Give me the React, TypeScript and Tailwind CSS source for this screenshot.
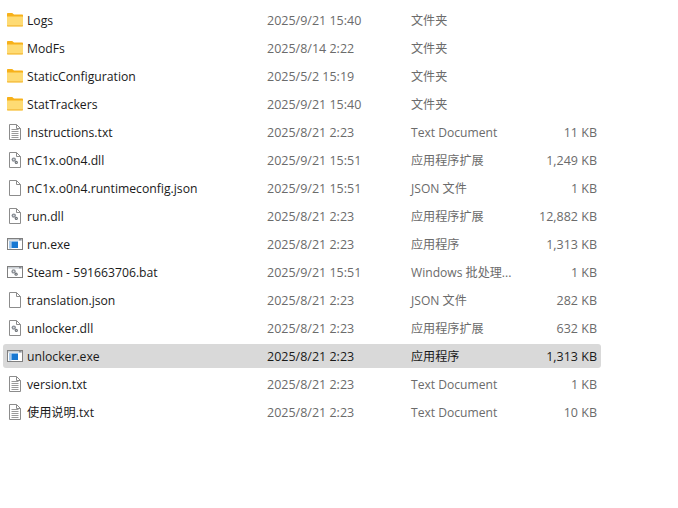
import React from "react";

type Kind = "folder" | "txt" | "dll" | "blank" | "exe" | "bat";

const files: { name: string; date: string; type: string; size?: string; icon: Kind; selected?: boolean }[] = [
  { name: "Logs", date: "2025/9/21 15:40", type: "文件夹", icon: "folder" },
  { name: "ModFs", date: "2025/8/14 2:22", type: "文件夹", icon: "folder" },
  { name: "StaticConfiguration", date: "2025/5/2 15:19", type: "文件夹", icon: "folder" },
  { name: "StatTrackers", date: "2025/9/21 15:40", type: "文件夹", icon: "folder" },
  { name: "Instructions.txt", date: "2025/8/21 2:23", type: "Text Document", size: "11 KB", icon: "txt" },
  { name: "nC1x.o0n4.dll", date: "2025/9/21 15:51", type: "应用程序扩展", size: "1,249 KB", icon: "dll" },
  { name: "nC1x.o0n4.runtimeconfig.json", date: "2025/9/21 15:51", type: "JSON 文件", size: "1 KB", icon: "blank" },
  { name: "run.dll", date: "2025/8/21 2:23", type: "应用程序扩展", size: "12,882 KB", icon: "dll" },
  { name: "run.exe", date: "2025/8/21 2:23", type: "应用程序", size: "1,313 KB", icon: "exe" },
  { name: "Steam - 591663706.bat", date: "2025/9/21 15:51", type: "Windows 批处理...", size: "1 KB", icon: "bat" },
  { name: "translation.json", date: "2025/8/21 2:23", type: "JSON 文件", size: "282 KB", icon: "blank" },
  { name: "unlocker.dll", date: "2025/8/21 2:23", type: "应用程序扩展", size: "632 KB", icon: "dll" },
  { name: "unlocker.exe", date: "2025/8/21 2:23", type: "应用程序", size: "1,313 KB", icon: "exe", selected: true },
  { name: "version.txt", date: "2025/8/21 2:23", type: "Text Document", size: "1 KB", icon: "txt" },
  { name: "使用说明.txt", date: "2025/8/21 2:23", type: "Text Document", size: "10 KB", icon: "txt" },
];

const Gear = ({ x, y }: { x: number; y: number }) => (
  <g>
    <circle cx={x} cy={y} r="2.2" fill="#8a8f96" />
    <circle cx={x} cy={y} r="0.8" fill="#dfe2e5" />
    <circle cx={x + 2.5} cy={y + 2.8} r="1.6" fill="#6f7479" />
    <circle cx={x + 2.5} cy={y + 2.8} r="0.5" fill="#dfe2e5" />
  </g>
);

const PageShape = () => (
  <path d="M2.5 .5H9.5L13.5 4.5V15.5H2.5Z M9.5 .5V4.5H13.5" fill="#fff" stroke="#8c8c8c" strokeWidth="1" />
);

const FileIcon = ({ kind }: { kind: Kind }) => {
  if (kind === "folder") {
    return (
      <svg width="16" height="16" viewBox="0 0 16 16" className="block">
        <path d="M0 2C0 1.4.4 1 1 1H5.2L7 2.5H15C15.6 2.5 16 2.9 16 3.5V5.5H0Z" fill="#f7b11a" />
        <path d="M0 4.5H15.4C15.8 4.5 16 4.8 16 5.1V13.5C16 14.1 15.6 14.5 15 14.5H1C.4 14.5 0 14.1 0 13.5Z" fill="#fedb74" />
        <path d="M0 13H16V13.5C16 14.1 15.6 14.5 15 14.5H1C.4 14.5 0 14.1 0 13.5Z" fill="#f6c24a" />
      </svg>
    );
  }
  if (kind === "exe" || kind === "bat") {
    return (
      <svg width="16" height="16" viewBox="0 0 16 16" className="block">
        <rect x=".5" y="2.5" width="15" height="11" fill="#fff" stroke="#7f7f7f" />
        <rect x="1" y="3" width="14" height="1.6" fill="#c9ced3" />
        <rect x="12" y="3" width="2.4" height="1.4" fill="#8a8f96" />
        {kind === "exe" ? (
          <>
            <rect x="2" y="5" width="2.4" height="7.5" fill="#a9c9e8" />
            <rect x="4.5" y="5.5" width="6.5" height="6.5" fill="#1878d2" />
          </>
        ) : (
          <Gear x={6.6} y={7.4} />
        )}
      </svg>
    );
  }
  return (
    <svg width="16" height="16" viewBox="0 0 16 16" className="block">
      <PageShape />
      {kind === "txt" && (
        <path d="M4.5 5.5H11.5M4.5 7.5H11.5M4.5 9.5H11.5M4.5 11.5H11.5M4.5 13.5H11.5" stroke="#9a9a9a" strokeWidth="1" />
      )}
      {kind === "dll" && <Gear x={6.8} y={7.6} />}
    </svg>
  );
};

const App = () => {
  return (
    <div
      className="w-[678px] h-[508px] bg-white overflow-hidden pt-2 pl-[3px] leading-[22px]"
      style={{ fontFamily: '"Open Sans", "Noto Sans CJK SC", sans-serif' }}
    >
      <div className="w-[598px] flex flex-col gap-1">
        {files.map((f) => (
          <div
            key={f.name}
            className={`h-6 flex rounded-[3px] ${f.selected ? "bg-[#d9d9d9] text-[#1a1a1a]" : "text-[#6b6b6b]"}`}
          >
            <div className="w-[24px] pl-1 pt-1 shrink-0">
              <FileIcon kind={f.icon} />
            </div>
            <div className="w-[240px] pt-[2px] shrink-0 text-[12.2px] text-[#1a1a1a] whitespace-nowrap">{f.name}</div>
            <div className="w-[144px] pt-[2px] shrink-0 text-[12.5px] whitespace-nowrap">{f.date}</div>
            <div className="w-[100px] pt-[2px] shrink-0 text-[12.1px] whitespace-nowrap">{f.type}</div>
            <div className="w-[86px] pt-[2px] shrink-0 text-[12.5px] text-right whitespace-nowrap">{f.size}</div>
          </div>
        ))}
      </div>
    </div>
  );
};

export default App;
